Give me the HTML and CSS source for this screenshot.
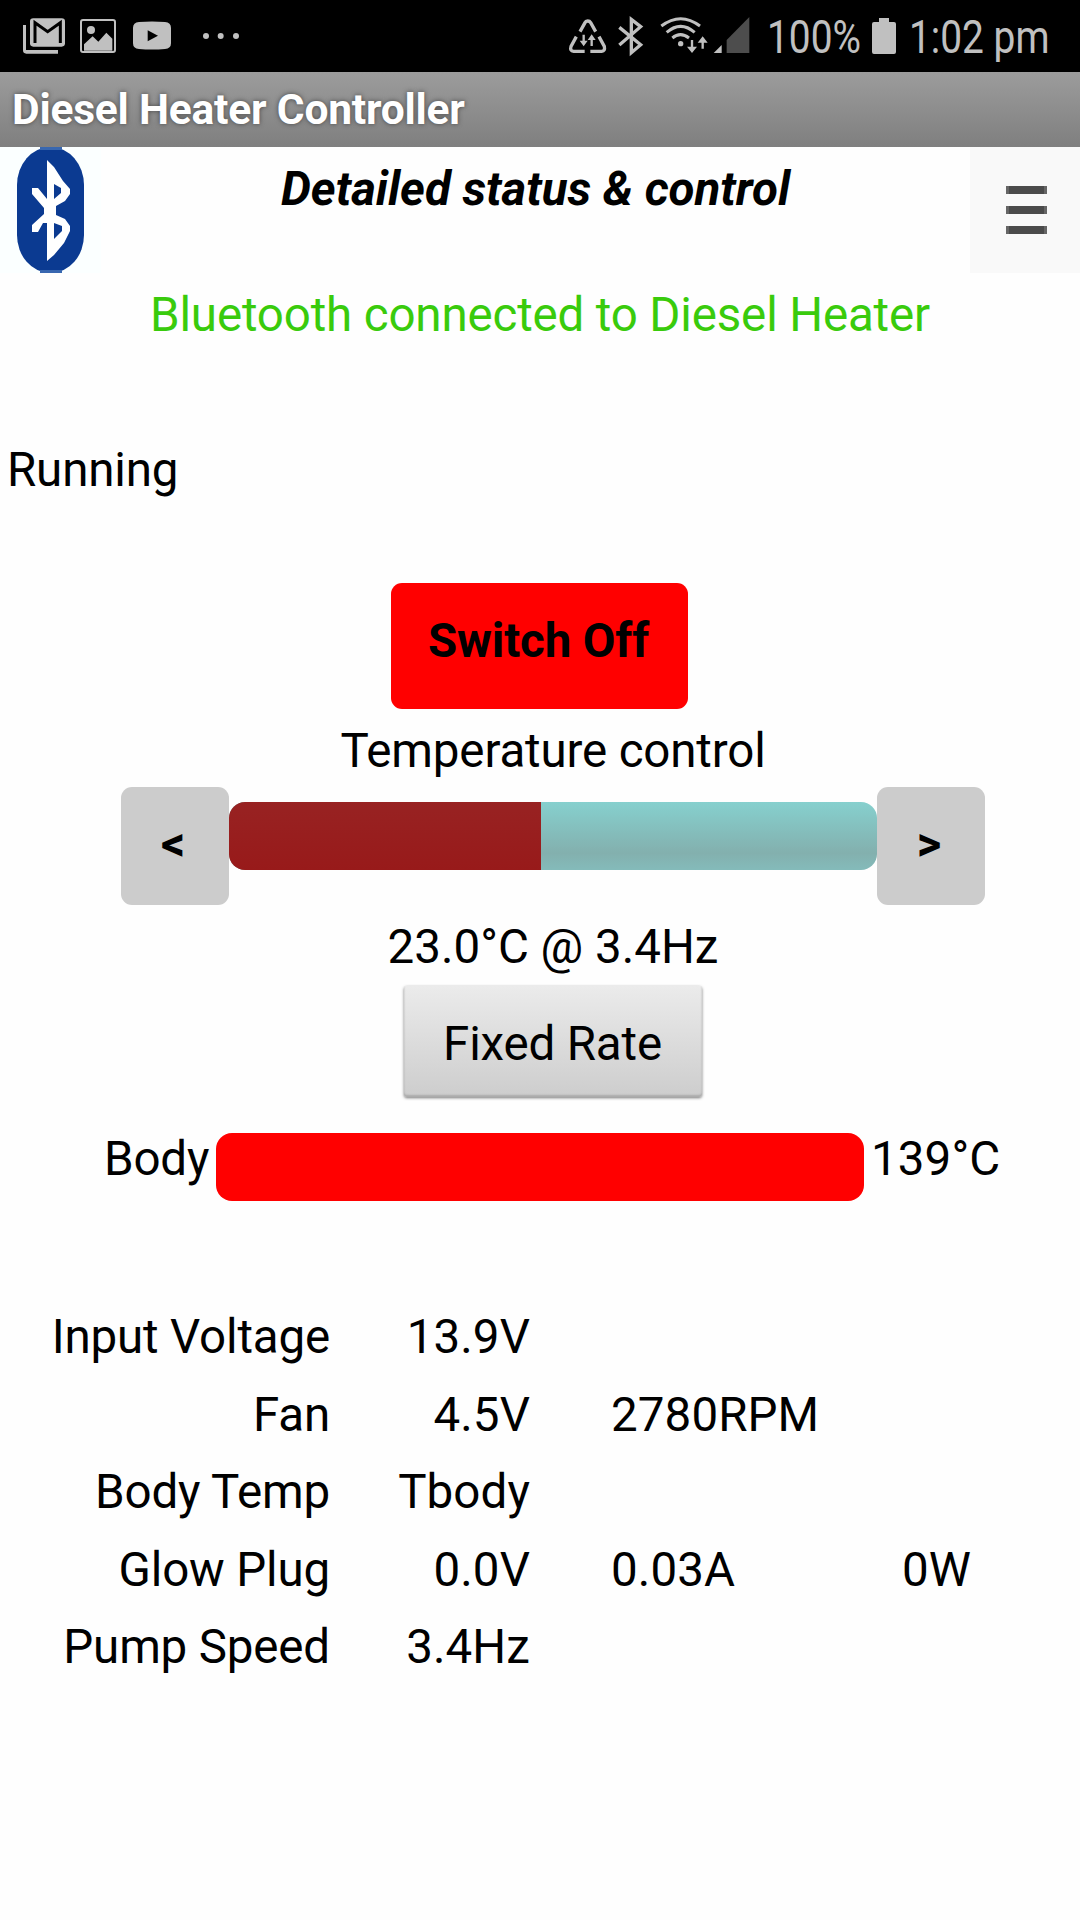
FILE: index.html
```
<!DOCTYPE html>
<html lang="en">
<head>
<meta charset="utf-8">
<title>Diesel Heater Controller</title>
<link rel="stylesheet" href="styles.css">
</head>
<body>
<div class="status">
  <svg class="status-left" width="270" height="72" viewBox="0 0 810 216" fill="#c0c0c0">
    <path d="M69 75h9v75h96v11H79q-10 0-10-10z"/>
    <rect x="90" y="55" width="105" height="85" rx="10"/>
    <path d="M105 129V68l38 27 38-27v61" fill="none" stroke="#000" stroke-width="9"/>
    <rect x="243" y="60" width="102" height="96" rx="6" fill="none" stroke="#c0c0c0" stroke-width="6"/>
    <circle cx="273" cy="90" r="12"/>
    <path d="M252 133l26-24 17 16 24-27 18 18v36h-85z"/>
    <path d="M417 66q39-3 78 0 18 1 18 18v46q0 16-18 17-39 3-78 0-18-1-18-17V84q0-17 18-18z"/>
    <path d="M443 91v33l31-17z" fill="#000"/>
    <circle cx="618" cy="108" r="9"/><circle cx="662" cy="108" r="9"/><circle cx="708" cy="108" r="9"/>
  </svg>
  <svg class="status-icons" width="202" height="72" viewBox="0 0 606 216" fill="none" stroke="#c0c0c0">
    <g stroke-width="10">
      <path d="M90 95l15-27q2-5 8-5t9 5l15 27M79 110l-16 29q-4 14 8 15h33M147 110l16 29q3 14-8 15h-34"/>
      <path d="M101 104v24M125 138v-24" stroke-width="7"/>
      <path d="M208 82l64 52-28 24V58l28 22-64 55"/>
      <path d="M334 78q58-44 116 0M350 97q42-36 84 0M367 114q24-20 50 0" stroke-width="9"/>
      <path d="M426 120v28M458 146v-28" stroke-width="7"/>
    </g>
    <g fill="#c0c0c0" stroke="none">
      <path d="M89 122h24l-12 17zM113 120h24l-12-17zM411 140h30l-15 19zM443 128h30l-15-19z"/>
      <circle cx="392" cy="131" r="8"/>
      <path d="M491 159l24-24v24z"/>
      <path d="M530 159v-39l68-69v108z" fill="#4d4d4d"/>
    </g>
  </svg>
  <span class="condensed battery-level">100%</span>
  <svg class="battery" width="24" height="36" viewBox="0 0 24 36"><path d="M7 0h10v4h5q2 0 2 2v28q0 2-2 2H2q-2 0-2-2V6q0-2 2-2h5z" fill="#c0c0c0"/></svg>
  <span class="condensed clock">1:02 pm</span>
</div>
<header class="titlebar">Diesel Heater Controller</header>
<div class="toolbar">
  <svg class="logo" width="101" height="126" viewBox="0 0 101 126">
    <rect width="101" height="126" fill="#fbffff"/>
    <rect x="17" width="67" height="126" rx="33" ry="38" fill="#0b3a91"/>
    <path d="M40 0h22v3H40zM40 123h22v3H40z" fill="#3867b0"/>
    <path fill-rule="evenodd" fill="#fff" d="M47 13L54 20 63 34 70 42V47L65 54 56 59V68L65 72 70 79V84L64 96 54 108 47 114V76L43 76 38 85H32V78L44 67V61L32 47V41H38L47 52zM54 37V52L61 46V41zM54 76V92L62 84V79z"/>
  </svg>
  <h1 class="heading">Detailed status &amp; control</h1>
  <button class="menu"><i></i><i></i><i></i></button>
</div>
<p class="connection">Bluetooth connected to Diesel Heater</p>
<p class="state">Running</p>
<button class="switch">Switch Off</button>
<section class="temperature">
  <p class="label">Temperature control</p>
  <div class="slider">
    <button class="step">&lt;</button>
    <div class="track"><div class="fill"></div></div>
    <button class="step">&gt;</button>
  </div>
  <p class="setpoint">23.0°C @ 3.4Hz</p>
  <button class="rate">Fixed Rate</button>
</section>
<div class="body-temp"><span class="body-label">Body</span><div class="gauge"></div><span class="body-value">139°C</span></div>
<div class="readings">
  <b>Input Voltage</b><span>13.9V</span><em></em><em></em>
  <b>Fan</b><span>4.5V</span><em>2780RPM</em><em></em>
  <b>Body Temp</b><span>Tbody</span><em></em><em></em>
  <b>Glow Plug</b><span>0.0V</span><em>0.03A</em><em>0W</em>
  <b>Pump Speed</b><span>3.4Hz</span><em></em><em></em>
</div>
</body>
</html>
```
FILE: styles.css
```
* { box-sizing: border-box; }
body { margin: 0; width: 1080px; height: 1920px; overflow: hidden; background: #fefefe; color: #000; font: 47.5px/56px Roboto, sans-serif; letter-spacing: -0.16px; }
p, h1 { margin: 0; }
button { font: inherit; letter-spacing: inherit; color: #000; border: 0; padding: 0; display: block; }
svg { display: block; flex: none; }

.status { display: flex; height: 72px; background: #000; color: #c0c0c0; }
.status-icons { margin-left: 280px; }
.condensed { font-size: 46px; line-height: 74px; letter-spacing: 0; white-space: nowrap; transform-origin: 0 50%; transform: scaleX(0.845); }
.battery-level { width: 94px; margin-left: 15px; }
.battery { margin: 18px 0 0 11px; }
.clock { width: 150px; margin-left: 13px; }

.titlebar { height: 75px; padding: 10px 0 0 12px; background: linear-gradient(#9c9c9c, #7f7f7f); color: #fff; font-size: 42.5px; font-weight: 700; letter-spacing: -0.2px; text-shadow: 0 0 5px #444; }

.toolbar { display: flex; justify-content: space-between; height: 126px; }
.heading { padding-top: 14px; font-size: 47.5px; line-height: 56px; font-weight: 700; font-style: italic; letter-spacing: -0.05px; }
.menu { display: flex; flex-direction: column; gap: 12px; width: 110px; height: 126px; padding: 39px 0 0 36px; background: #f9f9f9; }
.menu i { width: 41px; height: 8px; background: #4b4b4b; border: solid #666; border-width: 0 3px; }

.connection { margin-top: 14px; text-align: center; color: #39cb0c; }
.state { margin: 99px 0 0 7px; }
.switch { width: 297px; height: 126px; margin: 85px 0 0 391px; padding: 0 2px 10px 0; border-radius: 11px; background: #f00; font-weight: 700; }

.temperature { width: 864px; margin: 14px 0 0 121px; text-align: center; }
.slider { display: flex; margin-top: 8px; }
.step { width: 108px; height: 118px; padding: 0 4px 4px 0; border-radius: 11px; background: #ccc; font-weight: 700; }
.track { width: 648px; height: 68px; margin-top: 15px; border-radius: 16px; overflow: hidden; background: linear-gradient(#86d0ce, #83b0ae 75%, #84bbba); }
.fill { width: 312px; height: 68px; background: linear-gradient(#982222, #981a1a); }
.setpoint { margin-top: 14px; letter-spacing: 0; }
.rate { width: 298px; height: 111px; margin: 11px auto 0; padding: 5px 1px 0 0; background: linear-gradient(#ebebeb, #cdcdcd); border-radius: 3px; box-shadow: 0 1px 3px #777, inset 0 -2px 2px #aaa; }

.body-temp { display: flex; margin-top: 36px; padding-left: 104px; }
.body-label { width: 112px; margin-top: -2px; }
.gauge { width: 648px; height: 68px; border-radius: 16px; background: #f00; }
.body-value { margin: -2px 0 0 7px; letter-spacing: 0.1px; }

.readings { display: grid; grid-template-columns: 330px 200px 291px 230px; grid-auto-rows: 77.6px; margin-top: 108px; }
.readings b, .readings em { font-weight: 400; font-style: normal; }
.readings b, .readings span { text-align: right; }
.readings span, .readings em { letter-spacing: 0.1px; }
.readings em { padding-left: 81px; }
```
